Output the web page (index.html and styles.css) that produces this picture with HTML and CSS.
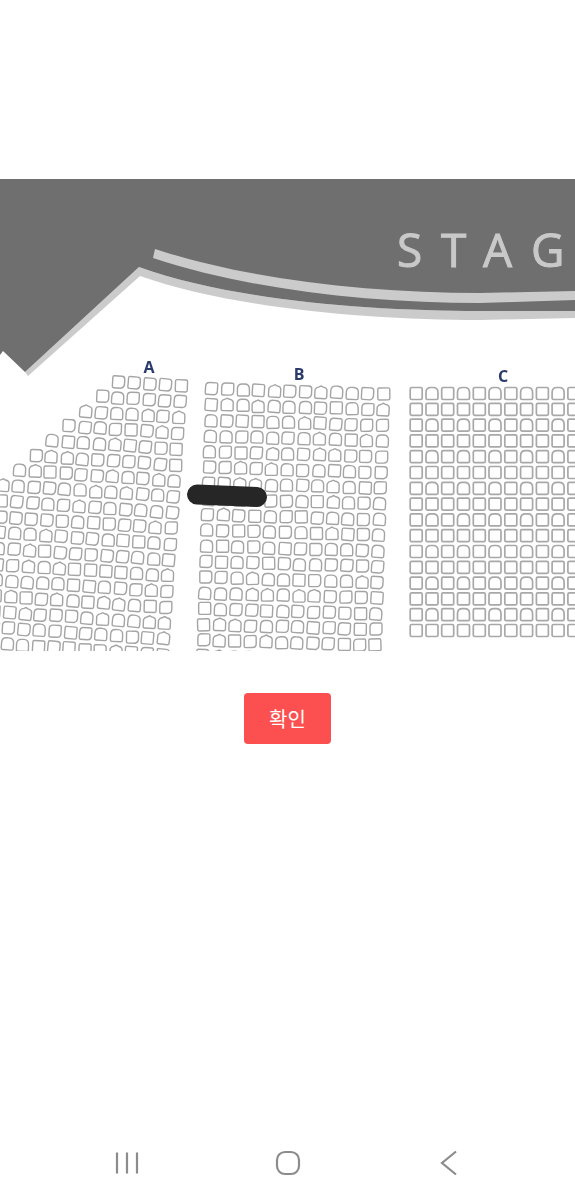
FILE: index.html
```html
<!DOCTYPE html>
<html lang="ko">
<head>
    <meta charset="UTF-8">
    <meta name="viewport" content="width=device-width, initial-scale=1.0">
    <title>좌석 배치도</title>
    <link rel="stylesheet" href="styles.css">
</head>
<body>
    <svg class="seat-map" viewBox="0 179 575 472" xmlns="http://www.w3.org/2000/svg">
        <path class="stage-edge" d="M25 372 L139 267 C230 300 370 311 480 311 L575 311 V318 L480 320 C370 320 230 308 140 276 L28 376 Z"/>
        <path class="stage" d="M0 179 H575 V311 L480 311 C370 311 230 300 139 267 L25 372 L3 351 L0 355 Z"/>
        <path class="stage-edge" d="M155 249 C250 280 370 293 480 293 L575 291 V300 L480 303 C370 303 250 290 153 258 Z"/>
        <text class="stage-title" x="397 441 483 531" y="266.5">STAG</text>
        <text class="block-label" x="149" y="373">A</text>
        <text class="block-label" x="299" y="380">B</text>
        <text class="block-label" x="503" y="382">C</text>
        <g id="seats"></g>
        <line class="held-bar" x1="197" y1="494.5" x2="257" y2="497"/>
    </svg>

    <button class="confirm-button">확인</button>

    <nav class="nav-bar">
        <div class="nav-item">
            <svg class="nav-icon" width="24" height="24" viewBox="0 0 24 24">
                <path d="M2 1.5 V22.5 M12 1.5 V22.5 M22 1.5 V22.5"/>
            </svg>
        </div>
        <div class="nav-item">
            <svg class="nav-icon" width="26" height="26" viewBox="0 0 26 26">
                <rect x="2" y="2" width="22" height="22" rx="8"/>
            </svg>
        </div>
        <div class="nav-item">
            <svg class="nav-icon" width="18" height="26" viewBox="0 0 18 26">
                <path d="M16 1.5 L2 13 L16 24.5"/>
            </svg>
        </div>
    </nav>

    <script src="seats.js"></script>
</body>
</html>
```

FILE: styles.css
```css
body {
    font-family: "Noto Sans CJK KR", "Noto Sans", sans-serif;
    margin: 0;
    padding: 0;
    height: 1200px;
    background-color: #fff;
    display: flex;
    flex-direction: column;
    align-items: center;
    overflow: hidden;
}
.seat-map {
    display: block;
    flex: none;
    width: 575px;
    height: 472px;
    margin-top: 179px;
    filter: blur(0.4px);
}
.stage {
    fill: #6f6f6f;
}
.stage-edge {
    fill: #cbcbcb;
}
.stage-title {
    font-family: "Open Sans", sans-serif;
    font-size: 46px;
    fill: #c9c9c9;
    stroke: #c9c9c9;
    stroke-width: 1;
}
.block-label {
    font-family: "Open Sans", sans-serif;
    font-size: 16px;
    font-weight: 700;
    text-anchor: middle;
    fill: #2a3b6b;
}
.seat {
    fill: #fff;
    stroke: #a4a4a4;
    stroke-width: 1.4;
}
.seat-plain {
    stroke-width: 1.7;
    stroke: #a8a8a8;
}
.held-bar {
    stroke: #262626;
    stroke-width: 20;
    stroke-linecap: round;
}
.confirm-button {
    flex: none;
    width: 87px;
    height: 51px;
    margin-top: 42px;
    padding: 0;
    font-family: inherit;
    font-size: 20px;
    color: #fff;
    background-color: #fc5050;
    border: none;
    border-radius: 4px;
}
.nav-bar {
    display: flex;
    justify-content: center;
    align-items: center;
    flex: none;
    height: 74px;
    margin-top: auto;
}
.nav-item {
    display: flex;
    justify-content: center;
    width: 161px;
}
.nav-icon {
    fill: none;
    stroke: #8c8c8c;
    stroke-width: 2.2;
}
```

FILE: seats.js
```js
const SVG_NS = 'http://www.w3.org/2000/svg';
const seats = document.getElementById('seats');

// bentuk kursi, titik tengah di 0,0
const SQUARE = 'M-4.5 -6 H4.5 Q6 -6 6 -4.5 V4.5 Q6 6 4.5 6 H-4.5 Q-6 6 -6 4.5 V-4.5 Q-6 -6 -4.5 -6 Z';
const ARCH = 'M-6 -1 Q-6 -6 -1 -6 H1 Q6 -6 6 -1 V4.5 Q6 6 4.5 6 H-4.5 Q-6 6 -6 4.5 Z';
const SHAPES = [
    SQUARE,
    ARCH,
    ARCH,
    'M-6 -2.5 Q-5 -5 -2 -5.5 L0 -6.5 L2 -5.5 Q6 -5 6 -2 V4.5 Q6 6 4.5 6 H-4.5 Q-6 6 -6 4.5 Z',
    'M-4.5 -6 H3 Q6 -6 6 -3 V2 Q6 5 3 6 H-4.5 Q-6 6 -6 4.5 V-4.5 Q-6 -6 -4.5 -6 Z',
    'M-6 -2 Q-6 -6 -2 -6 H4.5 Q6 -6 6 -4.5 V2 Q6 6 2 6 H-4.5 Q-6 6 -6 4.5 Z'
];

// angka semu supaya gambar selalu sama
let seed = 7;
function rand() {
    seed = (seed * 16807) % 2147483647;
    return seed / 2147483647;
}

function addSeat(d, x, y, angle, className) {
    const seat = document.createElementNS(SVG_NS, 'path');
    seat.setAttribute('d', d);
    seat.setAttribute('class', className);
    seat.setAttribute('transform', 'translate(' + x.toFixed(1) + ' ' + y.toFixed(1) + ') rotate(' + angle.toFixed(1) + ')');
    seats.appendChild(seat);
}

function addRoughSeat(x, y, tilt) {
    const d = SHAPES[Math.floor(rand() * SHAPES.length)];
    addSeat(d, x + rand() - 0.5, y + rand() - 0.5, tilt + (rand() - 0.5) * 6, 'seat');
}

// blok A: barisnya makin panjang ke bawah
for (let row = 0; row < 18; row++) {
    const rightX = 181 - row * 1.1;
    const rightY = 386 + row * 15.8;
    for (let col = 0; col < 5 + row; col++) {
        addRoughSeat(rightX - col * 15.5, rightY - col * 15.5 * 0.067, 3.8);
    }
}

// blok B
for (let row = 0; row < 18; row++) {
    for (let col = 0; col < 12; col++) {
        const x = 212 + col * 15.6 - row * 0.53;
        const y = 389 + row * 15.7 + col * 0.45;
        addRoughSeat(x, y, 1.5);
    }
}

// blok C: lurus, selang-seling kotak dan lengkung
for (let row = 0; row < 16; row++) {
    for (let col = 0; col < 11; col++) {
        const d = row % 2 === 0 && col % 2 === 1 ? ARCH : SQUARE;
        addSeat(d, 416.2 + col * 15.77, 393.5 + row * 15.8, 0, 'seat seat-plain');
    }
}
```
